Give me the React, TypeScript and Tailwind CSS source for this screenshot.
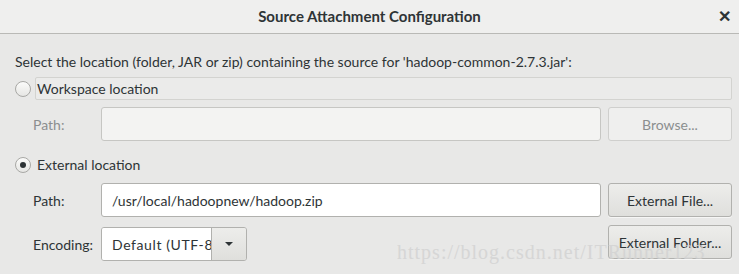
import React from 'react';

const font = { fontFamily: 'Lato, "Noto Sans", sans-serif' };

function Radio({ checked }: { checked?: boolean }) {
  return (
    <span className="flex h-[16px] w-[16px] shrink-0 items-center justify-center rounded-full border border-[#a8a8a5] bg-gradient-to-b from-[#fbfbfa] to-[#e6e6e4]">
      {checked && <span className="h-[6px] w-[6px] rounded-full bg-[#2e3436]" />}
    </span>
  );
}

function Button({ label, disabled }: { label: string; disabled?: boolean }) {
  return (
    <div
      className={
        disabled
          ? 'flex h-[34px] w-[124px] items-center justify-center rounded-[3px] border border-[#cfcfcd] bg-[#efefee] text-[#8b8e8f]'
          : 'flex h-[34px] w-[124px] items-center justify-center rounded-[3px] border border-[#b1b1ae] bg-gradient-to-b from-[#ededeb] to-[#dfdfdc] text-[#2e3436] shadow-[0_1px_0_rgba(255,255,255,0.6)]'
      }
    >
      {label}
    </div>
  );
}

export default function App() {
  return (
    <div className="relative h-[274px] w-[739px] overflow-hidden bg-[#e8e8e7] text-[14px] text-[#2e3436]" style={font}>
      {/* title bar */}
      <div className="relative flex h-[34px] items-center justify-center border-b border-[#b9b9b6] bg-[#efefee]">
        <span className="text-[15px] font-bold text-[#2e3436]">Source Attachment Configuration</span>
        <span className="absolute right-[8px] top-[6px] text-[16px] font-bold leading-[20px]">✕</span>
      </div>

      <div className="flex flex-col pl-[15px] pr-[7px]">
        <p className="mt-[20px] leading-[16px]">
          Select the location (folder, JAR or zip) containing the source for 'hadoop-common-2.7.3.jar':
        </p>

        <div className="mt-[7px] flex h-[23px] items-center gap-[4px]">
          <Radio />
          <div className="flex h-[23px] flex-1 items-center rounded-[2px] border border-[#d3d3d0] bg-[#ebebea] pl-[1px]">
            Workspace location
          </div>
        </div>

        <div className="mt-[7px] flex items-center">
          <span className="w-[86px] pl-[18px] text-[#8b8e8f]">Path:</span>
          <div className="h-[34px] w-[501px] rounded-[3px] border border-[#c6c6c3] bg-[#f3f3f2]" />
          <div className="ml-[7px]">
            <Button label="Browse..." disabled />
          </div>
        </div>

        <div className="mt-[12px] flex h-[23px] items-center gap-[6px]">
          <Radio checked />
          <span>External location</span>
        </div>

        <div className="mt-[7px] flex items-center">
          <span className="w-[86px] pl-[18px]">Path:</span>
          <div className="flex h-[34px] w-[501px] items-center rounded-[3px] border border-[#b1b1ae] bg-white px-[10px]">
            /usr/local/hadoopnew/hadoop.zip
          </div>
          <div className="ml-[7px]">
            <Button label="External File..." />
          </div>
        </div>

        <div className="mt-[8px] flex items-start">
          <span className="mt-[9px] w-[86px] pl-[18px]">Encoding:</span>
          <div className="mt-[2px] flex h-[34px] w-[146px] overflow-hidden rounded-[3px] border border-[#b1b1ae]">
            <div className="flex flex-1 items-center overflow-hidden whitespace-nowrap bg-white pl-[10px] tracking-[0.6px]">
              Default (UTF-8)
            </div>
            <div className="flex w-[35px] items-center justify-center border-l border-[#b1b1ae] bg-gradient-to-b from-[#ededeb] to-[#dfdfdc]">
              <svg width="10" height="6" viewBox="0 0 10 6">
                <path d="M1 1 L9 1 L5 5 Z" fill="#2e3436" />
              </svg>
            </div>
          </div>
          <div className="flex-1" />
          <Button label="External Folder..." />
        </div>
      </div>

      {/* csdn watermark */}
      <span
        className="pointer-events-none absolute left-[397px] top-[241px] whitespace-nowrap text-[20px] leading-[22px] tracking-[1px] text-[#d2d2d2] opacity-80"
        style={{ fontFamily: '"Liberation Serif", "DejaVu Serif", serif' }}
      >
        https://blog.csdn.net/ITRunner123
      </span>
    </div>
  );
}
